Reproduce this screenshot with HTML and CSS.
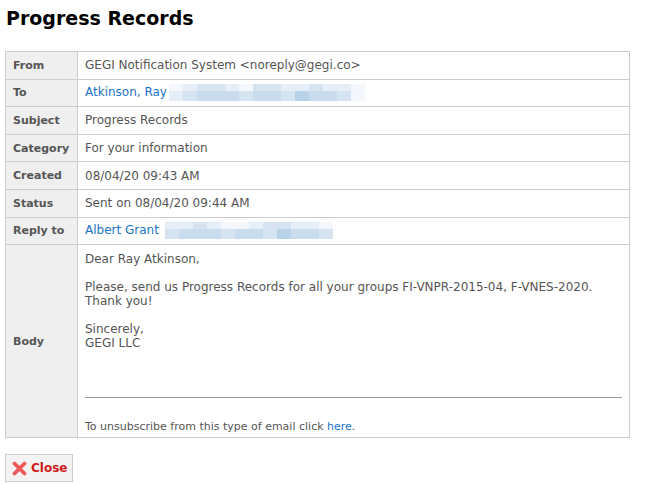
FILE: index.html
```html
<!DOCTYPE html>
<html>
<head>
<meta charset="utf-8">
<link rel="stylesheet" href="styles.css">
</head>
<body>
<h1 class="title">Progress Records</h1>
<table class="msg">
  <tr><th>From</th><td>GEGI Notification System &lt;noreply@gegi.co&gt;</td></tr>
  <tr><th>To</th><td><a class="link" href="#">Atkinson, Ray</a><span class="blur blur-to">
    <span class="br"><i class="c0"></i><i class="c1"></i><i class="c2"></i><i class="c2"></i><i class="c1"></i><i class="c0"></i><i class="c2"></i><i class="c2"></i><i class="c1"></i><i class="c1"></i><i class="c2"></i><i class="c1"></i><i class="c1"></i><i class="c0"></i></span>
    <span class="br"><i class="c1"></i><i class="c2"></i><i class="c3"></i><i class="c3"></i><i class="c3"></i><i class="c2"></i><i class="c3"></i><i class="c3"></i><i class="c2"></i><i class="c4"></i><i class="c3"></i><i class="c3"></i><i class="c2"></i><i class="c0"></i></span>
  </span></td></tr>
  <tr><th>Subject</th><td>Progress Records</td></tr>
  <tr><th>Category</th><td>For your information</td></tr>
  <tr><th>Created</th><td>08/04/20 09:43 AM</td></tr>
  <tr><th>Status</th><td>Sent on 08/04/20 09:44 AM</td></tr>
  <tr><th>Reply to</th><td><a class="link" href="#">Albert Grant</a><span class="blur blur-reply">
    <span class="br"><i class="c1"></i><i class="c1"></i><i class="c2"></i><i class="c1"></i><i class="c0"></i><i class="c0"></i><i class="c1"></i><i class="c2"></i><i class="c2"></i><i class="c1"></i><i class="c1"></i><i class="c0"></i></span>
    <span class="br"><i class="c2"></i><i class="c3"></i><i class="c3"></i><i class="c3"></i><i class="c2"></i><i class="c3"></i><i class="c3"></i><i class="c2"></i><i class="c4"></i><i class="c3"></i><i class="c3"></i><i class="c2"></i></span>
  </span></td></tr>
  <tr class="body-row"><th>Body</th><td>
    <div class="body-text">
      <p>Dear Ray Atkinson,</p>
      <p>Please, send us Progress Records for all your groups FI-VNPR-2015-04, F-VNES-2020.<br>Thank you!</p>
      <p>Sincerely,<br>GEGI LLC</p>
    </div>
    <hr class="rule">
    <div class="unsub">To unsubscribe from this type of email click <a class="link" href="#">here</a>.</div>
  </td></tr>
</table>
<div class="actions">
  <button class="btn-close" type="button"><svg class="x-icon" width="15" height="15" viewBox="0 0 15 15"><path d="M2.5 2.5 L12.5 12.5 M12.5 2.5 L2.5 12.5" stroke="#ee5a5a" stroke-width="3.8" stroke-linecap="round"/></svg><span>Close</span></button>
</div>
</body>
</html>
```
FILE: styles.css
```css
html, body { margin: 0; padding: 0; background: #fff; }
body {
  font-family: "DejaVu Sans", Verdana, sans-serif;
  font-size: 12px;
  color: #555;
  padding: 6px 16px 0 5px;
}
.title {
  font-family: "DejaVu Sans", Verdana, sans-serif;
  font-size: 19px;
  font-weight: bold;
  color: #000;
  margin: 0 0 21px 1px;
  line-height: 24px;
}
.msg {
  width: 625px;
  border-collapse: collapse;
  border: 1px solid #ccc;
}
.msg th, .msg td {
  border: 1px solid #ccc;
  height: 26.6px;
  padding: 0 7px;
  vertical-align: middle;
  text-align: left;
}
.msg th {
  width: 57px;
  background: #efefef;
  color: #555;
  font-size: 11px;
  font-weight: bold;
}
.link { color: #1a73c6; text-decoration: none; }
.blur { display: inline-flex; flex-direction: column; vertical-align: middle; margin-left: 2px; }
.blur-reply { margin-left: 6px; }
.br { display: flex; }
.br:first-child i { height: 7px; }
.br:last-child i { height: 10px; }
.br i { display: block; width: 14px; }
.c0 { background: #f4f8fc; }
.c1 { background: #e6eef7; }
.c2 { background: #d6e4f1; }
.c3 { background: #c9dcee; }
.c4 { background: #b8d2e8; }
.body-row td { vertical-align: top; padding: 7px 7px 3px 7px; height: auto; }
.body-text p { margin: 0 0 14px 0; line-height: 14px; }
.body-text p:last-child { margin-bottom: 0; }
.rule { border: 0; border-top: 1px solid #999; margin: 47px 0 0 0; height: 0; }
.unsub { font-size: 11px; margin-top: 22px; line-height: 14px; }
.actions { margin-top: 16px; }
.btn-close {
  display: inline-flex;
  align-items: center;
  gap: 4px;
  height: 28px;
  padding: 0 5px 0 6px;
  background: #f3f3f3;
  border: 1px solid #ccc;
  font-family: "DejaVu Sans", Verdana, sans-serif;
  font-size: 12px;
  font-weight: bold;
  color: #d21a1a;
  cursor: pointer;
}
```
